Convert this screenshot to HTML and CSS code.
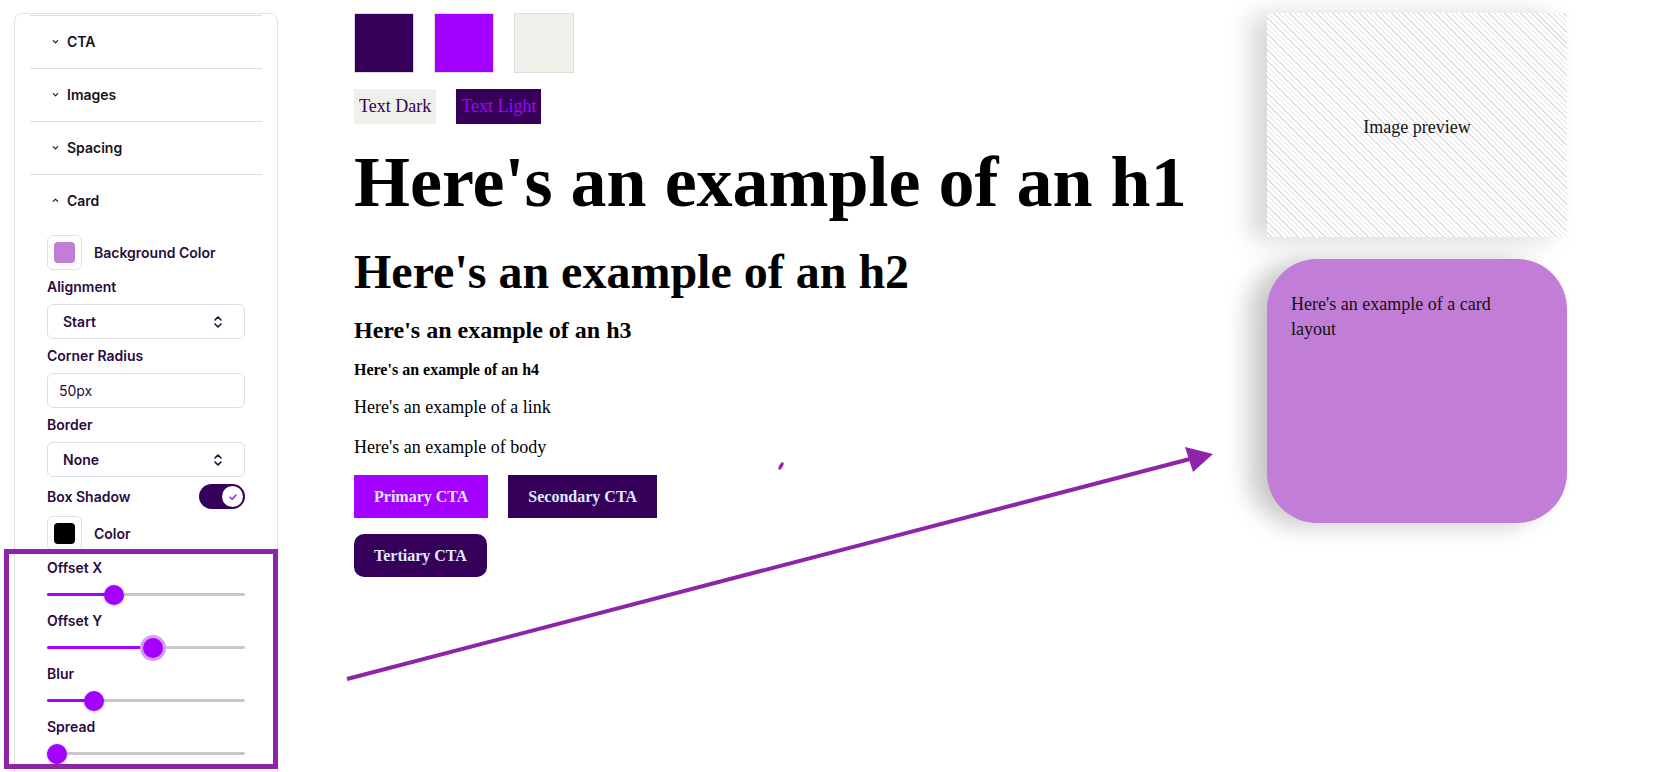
FILE: index.html
```html
<!DOCTYPE html>
<html>
<head>
<meta charset="utf-8">
<title>Theme editor</title>
<link rel="stylesheet" href="styles.css">
</head>
<body>
<div class="app">
  <aside class="panel">
    <div class="acc-item">
      <div class="acc-head"><svg class="chev" viewBox="0 0 8 8"><path d="M1.5 3 L4 5.5 L6.5 3"/></svg><span>CTA</span></div>
    </div>
    <div class="acc-item">
      <div class="acc-head"><svg class="chev" viewBox="0 0 8 8"><path d="M1.5 3 L4 5.5 L6.5 3"/></svg><span>Images</span></div>
    </div>
    <div class="acc-item">
      <div class="acc-head"><svg class="chev" viewBox="0 0 8 8"><path d="M1.5 3 L4 5.5 L6.5 3"/></svg><span>Spacing</span></div>
    </div>
    <div class="acc-item">
      <div class="acc-head"><svg class="chev" viewBox="0 0 8 8"><path d="M1.5 5 L4 2.5 L6.5 5"/></svg><span>Card</span></div>
      <div class="acc-body">
        <div class="color-row">
          <div class="swatch"><div class="swatch-fill fill-card"></div></div>
          <span class="label">Background Color</span>
        </div>
        <div class="label">Alignment</div>
        <div class="select"><span>Start</span><svg class="updown" viewBox="0 0 10 14"><path d="M2 5 L5 2 L8 5 M2 9 L5 12 L8 9"/></svg></div>
        <div class="label">Corner Radius</div>
        <div class="input">50px</div>
        <div class="label">Border</div>
        <div class="select"><span>None</span><svg class="updown" viewBox="0 0 10 14"><path d="M2 5 L5 2 L8 5 M2 9 L5 12 L8 9"/></svg></div>
        <div class="toggle-row">
          <span class="label">Box Shadow</span>
          <div class="toggle"><div class="knob"><svg viewBox="0 0 12 12"><path d="M3 6.2 L5.2 8.3 L9 4"/></svg></div></div>
        </div>
        <div class="color-row">
          <div class="swatch"><div class="swatch-fill fill-black"></div></div>
          <span class="label">Color</span>
        </div>
        <div class="label">Offset X</div>
        <div class="slider"><div class="track"></div><div class="fill" style="width:67px"></div><div class="thumb" style="left:67px"></div></div>
        <div class="label">Offset Y</div>
        <div class="slider"><div class="track"></div><div class="fill" style="width:106px"></div><div class="thumb focus" style="left:106px"></div></div>
        <div class="label">Blur</div>
        <div class="slider"><div class="track"></div><div class="fill" style="width:47px"></div><div class="thumb" style="left:47px"></div></div>
        <div class="label">Spread</div>
        <div class="slider"><div class="track"></div><div class="fill" style="width:10px"></div><div class="thumb" style="left:10px"></div></div>
      </div>
    </div>
  </aside>

  <main class="preview">
    <div class="swatches">
      <div class="sq sq-dark"></div>
      <div class="sq sq-bright"></div>
      <div class="sq sq-light"></div>
    </div>
    <div class="text-samples">
      <span class="ts ts-dark">Text Dark</span>
      <span class="ts ts-light">Text Light</span>
    </div>
    <h1 class="h1">Here's an example of an h1</h1>
    <h2 class="h2">Here's an example of an h2</h2>
    <h3 class="h3">Here's an example of an h3</h3>
    <h4 class="h4">Here's an example of an h4</h4>
    <a class="link">Here's an example of a link</a>
    <p class="body-text">Here's an example of body</p>
    <div class="btn-row">
      <span class="btn btn-primary">Primary CTA</span>
      <span class="btn btn-secondary">Secondary CTA</span>
    </div>
    <div class="btn-row row2">
      <span class="btn btn-tertiary">Tertiary CTA</span>
    </div>
  </main>

  <aside class="side">
    <div class="img-preview">Image preview</div>
    <div class="card">Here's an example of a card layout</div>
  </aside>
</div>

<div class="highlight"></div>
<svg class="annot" viewBox="0 0 1659 772">
  <line x1="347" y1="679" x2="1190" y2="459" stroke="#8e24aa" stroke-width="4"/>
  <polygon points="1213,454 1185,447 1193,472" fill="#8e24aa"/>
  <ellipse cx="781" cy="466" rx="1.8" ry="4.2" transform="rotate(28 781 466)" fill="#8e24aa"/>
</svg>
</body>
</html>
```

FILE: styles.css
```css
* { box-sizing: border-box; }

html, body {
  margin: 0;
  padding: 0;
  background: #fff;
}

body {
  width: 1659px;
  height: 772px;
  overflow: hidden;
  position: relative;
  font-family: "Liberation Serif", "Times New Roman", serif;
  color: #000;
}

.app {
  display: flex;
  align-items: flex-start;
  padding-top: 13px;
}

/* ---------- sidebar ---------- */
.panel {
  margin-left: 14px;
  width: 264px;
  min-height: 820px;
  border: 1px solid #e2e1e5;
  border-radius: 8px;
  padding: 1px 15px 0;
  font-family: Inter, "Noto Sans", sans-serif;
  flex-shrink: 0;
}

.acc-item {
  border-top: 1px solid #dcdbe0;
}

.acc-head {
  height: 52px;
  display: flex;
  align-items: center;
  padding-left: 22px;
  padding-bottom: 1px;
  gap: 8px;
  font-size: 14px;
  font-weight: 600;
  color: #17121c;
}

.chev {
  width: 7px;
  height: 7px;
  fill: none;
  stroke: #17121c;
  stroke-width: 1.3;
  stroke-linecap: round;
  stroke-linejoin: round;
}

.acc-body {
  padding: 8px 17px 0;
  display: flex;
  flex-direction: column;
  gap: 7px;
}

.label {
  font-size: 14px;
  font-weight: 600;
  line-height: 20px;
  color: #2a0b40;
}

.color-row {
  display: flex;
  align-items: center;
  gap: 12px;
}

.swatch {
  width: 35px;
  height: 35px;
  border: 1px solid #e0dfe3;
  border-radius: 6px;
  padding: 6px;
}

.swatch-fill {
  width: 100%;
  height: 100%;
  border-radius: 4px;
}

.fill-card { background: #c27dd6; }
.fill-black { background: #000; }

.select, .input {
  height: 35px;
  border: 1px solid #dedce2;
  border-radius: 6px;
  display: flex;
  align-items: center;
  font-size: 14px;
  color: #2a0b40;
}

.select {
  justify-content: space-between;
  padding: 0 21px 0 15px;
  font-weight: 600;
}

.input {
  padding-left: 11px;
  font-weight: 400;
}

.updown {
  width: 10px;
  height: 14px;
  fill: none;
  stroke: #2a0b40;
  stroke-width: 1.6;
  stroke-linecap: round;
  stroke-linejoin: round;
}

.toggle-row {
  display: flex;
  justify-content: space-between;
  align-items: center;
  height: 25px;
}

.toggle {
  width: 46px;
  height: 25px;
  border-radius: 13px;
  background: #36005a;
  display: flex;
  align-items: center;
  justify-content: flex-end;
  padding-right: 2px;
}

.knob {
  width: 21px;
  height: 21px;
  border-radius: 50%;
  background: #fff;
  display: flex;
  align-items: center;
  justify-content: center;
}

.knob svg {
  width: 12px;
  height: 12px;
  fill: none;
  stroke: #9b1ee6;
  stroke-width: 1.5;
  stroke-linecap: round;
  stroke-linejoin: round;
}

.slider {
  position: relative;
  height: 19px;
}

.track, .fill {
  position: absolute;
  left: 0;
  top: 8px;
  height: 3px;
  border-radius: 2px;
}

.track {
  right: 0;
  background: #c9c6cc;
}

.fill {
  background: #a300ff;
}

.thumb {
  position: absolute;
  top: -0.5px;
  width: 20px;
  height: 20px;
  margin-left: -10px;
  border-radius: 50%;
  background: #a300ff;
  box-shadow: 0 1px 3px rgba(0, 0, 0, 0.25);
}

.thumb.focus {
  box-shadow: 0 0 0 3px #d99cf6;
}

/* ---------- main preview ---------- */
.preview {
  margin-left: 76px;
  flex: 1;
  display: flex;
  flex-direction: column;
  align-items: flex-start;
}

.swatches {
  display: flex;
  gap: 20px;
}

.sq {
  width: 60px;
  height: 60px;
  border: 1px solid #dcdcdc;
}

.sq-dark { background: #36005a; }
.sq-bright { background: #a300ff; }
.sq-light { background: #f0f0eb; }

.text-samples {
  display: flex;
  gap: 20px;
  margin-top: 16px;
}

.ts {
  font-size: 18px;
  line-height: 27px;
  padding: 4px 5px;
}

.ts-dark { background: #f0f0eb; color: #36005a; }
.ts-light { background: #36005a; color: #a300ff; }

.h1, .h2, .h3, .h4 {
  font-weight: 700;
  line-height: 1;
  margin: 0;
}

.h1 { font-size: 72px; margin-top: 22px; }
.h2 { font-size: 48px; margin-top: 30px; }
.h3 { font-size: 24px; margin-top: 22px; }
.h4 { font-size: 16px; margin-top: 20px; }

.link {
  font-size: 18px;
  line-height: 18px;
  margin-top: 20px;
  color: #000;
  text-decoration: none;
}

.body-text {
  font-size: 18px;
  line-height: 18px;
  margin: 22px 0 0;
}

.btn-row {
  display: flex;
  gap: 20px;
  margin-top: 19px;
}

.btn-row.row2 { margin-top: 16px; }

.btn {
  font-size: 16px;
  font-weight: 700;
  line-height: 19px;
  padding: 12px 20px;
  color: #dcebff;
}

.btn-primary { background: #a300ff; }
.btn-secondary { background: #36005a; }
.btn-tertiary { background: #36005a; border-radius: 10px; }

/* ---------- right column ---------- */
.side {
  width: 300px;
  margin-right: 92px;
  flex-shrink: 0;
  display: flex;
  flex-direction: column;
  gap: 22px;
}

.img-preview {
  height: 224px;
  padding-top: 4px;
  display: flex;
  align-items: center;
  justify-content: center;
  font-size: 18px;
  color: #111;
  background: repeating-linear-gradient(45deg, #ffffff 0 2.8px, #dedede 2.8px 3.8px);
  box-shadow: -16px 2px 24px rgba(0, 0, 0, 0.16);
}

.card {
  height: 264px;
  border-radius: 50px;
  background: #c27dd6;
  padding: 33px 40px 0 24px;
  font-size: 18px;
  line-height: 25px;
  color: #111;
  box-shadow: -18px 2px 24px rgba(0, 0, 0, 0.22);
}

/* ---------- annotations ---------- */
.highlight {
  position: absolute;
  left: 4px;
  top: 549px;
  width: 274px;
  height: 220px;
  border: 5px solid #8e24aa;
}

.annot {
  position: absolute;
  left: 0;
  top: 0;
  width: 1659px;
  height: 772px;
  pointer-events: none;
}
```
